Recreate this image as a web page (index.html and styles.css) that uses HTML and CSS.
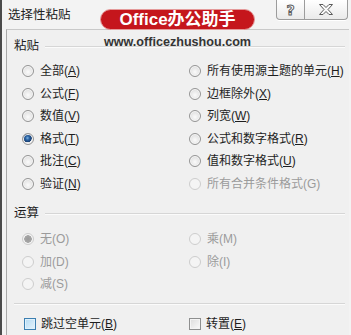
FILE: index.html
```html
<!DOCTYPE html>
<html lang="zh-CN">
  <head>
    <meta charset="UTF-8" />
    <meta name="viewport" content="width=device-width, initial-scale=1.0" />
    <title>选择性粘贴</title>
    <link rel="stylesheet" href="styles.css">
  </head>
  <body>
    <div class="dialog">
      <div class="titlebar">
        <span class="title">选择性粘贴</span>
        <div class="cap_btns">
          <span class="cap_btn help">?</span>
          <span class="cap_btn close">
            <svg width="16" height="11" viewBox="0 0 16 11">
              <polygon points="1.5,0.5 5,0.5 8,3.5 11,0.5 14.5,0.5 10,5.5 14.5,10.5 11,10.5 8,7.5 5,10.5 1.5,10.5 6,5.5" fill="#fafafa" stroke="#5a5a5a" stroke-width="1" stroke-linejoin="round" />
            </svg>
          </span>
        </div>
      </div>

      <div class="panel">
        <div class="group_head">粘贴</div>
        <div class="options paste">
          <label class="opt"><span class="radio"></span><span>全部(<u>A</u>)</span></label>
          <label class="opt"><span class="radio"></span><span>所有使用源主题的单元(<u>H</u>)</span></label>
          <label class="opt"><span class="radio"></span><span>公式(<u>F</u>)</span></label>
          <label class="opt"><span class="radio"></span><span>边框除外(<u>X</u>)</span></label>
          <label class="opt"><span class="radio"></span><span>数值(<u>V</u>)</span></label>
          <label class="opt"><span class="radio"></span><span>列宽(<u>W</u>)</span></label>
          <label class="opt"><span class="radio checked"></span><span>格式(<u>T</u>)</span></label>
          <label class="opt"><span class="radio"></span><span>公式和数字格式(<u>R</u>)</span></label>
          <label class="opt"><span class="radio"></span><span>批注(<u>C</u>)</span></label>
          <label class="opt"><span class="radio"></span><span>值和数字格式(<u>U</u>)</span></label>
          <label class="opt"><span class="radio"></span><span>验证(<u>N</u>)</span></label>
          <label class="opt disabled"><span class="radio"></span><span>所有合并条件格式(G)</span></label>
        </div>

        <div class="group_head calc">运算</div>
        <div class="options ops">
          <label class="opt disabled"><span class="radio checked"></span><span>无(O)</span></label>
          <label class="opt disabled"><span class="radio"></span><span>乘(M)</span></label>
          <label class="opt disabled"><span class="radio"></span><span>加(D)</span></label>
          <label class="opt disabled"><span class="radio"></span><span>除(I)</span></label>
          <label class="opt disabled"><span class="radio"></span><span>减(S)</span></label>
        </div>

        <div class="sep"></div>

        <div class="checks">
          <label class="opt"><span class="check hot"></span><span>跳过空单元(<u>B</u>)</span></label>
          <label class="opt"><span class="check"></span><span>转置(<u>E</u>)</span></label>
        </div>
      </div>

      <!-- 水印 -->
      <div class="watermark">
        <div class="logo">Office办公助手</div>
        <div class="site">www.officezhushou.com</div>
      </div>
    </div>
  </body>
</html>
```

FILE: styles.css
```css
* {
  padding: 0;
  margin: 0;
  box-sizing: border-box;
}
body {
  background-color: #f2f2f2;
  font-family: "Liberation Sans", "Noto Sans CJK SC", sans-serif;
  font-size: 12px;
  color: #1e1e1e;
}
u {
  text-decoration: underline;
  text-underline-offset: 1px;
}
.dialog {
  position: relative;
  width: 351px;
  height: 335px;
  background: #f3f3f3;
  border-left: 2px solid #4b4b4b;
  overflow: hidden;
}

/* 标题栏 */
.titlebar {
  height: 29px;
  display: flex;
  align-items: flex-start;
  justify-content: space-between;
}
.title {
  padding: 6px 0 0 6px;
  line-height: 18px;
  font-size: 12.5px;
  color: #222;
}
.cap_btns {
  display: flex;
  margin-right: 3px;
}
.cap_btn {
  height: 20px;
  display: flex;
  align-items: center;
  justify-content: center;
  border: 1px solid #9c9c9c;
  border-top: none;
  background: linear-gradient(#ffffff, #eaeaea);
  box-shadow: 0 1px 0 #ffffff;
}
.help {
  width: 29px;
  border-radius: 0 0 0 4px;
  font-family: "DejaVu Sans", sans-serif;
  font-size: 14px;
  font-weight: bold;
  color: #fbfbfb;
  -webkit-text-stroke: 1px #5d5d5d;
}
.close {
  width: 43px;
  border-left: none;
  border-radius: 0 0 4px 0;
}

/* 内容面板 */
.panel {
  height: 306px;
  margin: 0 2px 0 4px;
  padding: 6px 4px 0 7px;
  background: #f0f0f0;
  border-top: 1px solid #c9c9c9;
  border-left: 1px solid #a9a9a9;
}
.group_head {
  display: flex;
  align-items: center;
  gap: 6px;
  height: 20px;
  line-height: 20px;
  font-size: 12.5px;
}
.group_head::after {
  content: "";
  flex: 1;
  border-top: 1px solid #d6d6d6;
  box-shadow: 0 1px 0 #fbfbfb;
}
.group_head.calc {
  margin-top: 8px;
}
.options {
  display: grid;
  grid-template-columns: 167px 1fr;
  grid-auto-rows: 22.5px;
  padding-left: 8px;
}
.options.paste {
  margin-top: 4px;
}
.options.ops {
  margin-top: 5px;
}
.opt {
  display: flex;
  align-items: center;
  gap: 6px;
  line-height: 22px;
  white-space: nowrap;
}
.opt.disabled {
  color: #9b9b9b;
}
.radio {
  width: 12px;
  height: 12px;
  border-radius: 50%;
  border: 1px solid #959595;
  background: radial-gradient(circle at 50% 60%, #fbfbfb 0, #e6e6e6 55%, #d2d2d2 100%);
  box-shadow: inset 0 0 0 1px #f7f7f7;
  flex: none;
}
.radio.checked {
  background: radial-gradient(circle at 45% 40%, #7fb3df 0, #2a63a4 2px, #183f72 4px, #e9e9e9 4.5px, #dcdcdc 100%);
}
.disabled .radio {
  border-color: #cdcdcd;
  background: #f4f4f4;
  box-shadow: none;
}
.disabled .radio.checked {
  background: radial-gradient(circle, #9a9a9a 0, #a6a6a6 3.5px, #f4f4f4 4px);
}
.sep {
  margin-top: 7.5px;
  border-top: 1px solid #d6d6d6;
  box-shadow: 0 1px 0 #fbfbfb;
}
.checks {
  display: grid;
  grid-template-columns: 165px 1fr;
  height: 22px;
  margin-top: 9px;
  padding-left: 10px;
}
.checks .opt {
  gap: 5px;
}
.check {
  width: 12px;
  height: 12px;
  border: 1px solid #8e8f8f;
  background: linear-gradient(135deg, #dcdcdc, #fafafa);
  box-shadow: inset 0 0 0 1px #f4f4f4;
  flex: none;
}
.check.hot {
  border-color: #3c7fb1;
  background: linear-gradient(135deg, #b3daf3, #e6f4fc);
  box-shadow: inset 0 0 0 1px #dff1fc;
}

/* 水印 */
.watermark {
  position: absolute;
  left: 98px;
  top: 9px;
  width: 155px;
  text-align: center;
}
.logo {
  height: 21px;
  line-height: 20px;
  border-radius: 11px;
  background: #c5161c;
  border: 1px solid #e49a9a;
  color: #fff;
  font-size: 17px;
  font-weight: bold;
}
.site {
  margin-top: 4px;
  line-height: 16px;
  font-size: 12.6px;
  font-weight: bold;
  color: #353535;
}
```
